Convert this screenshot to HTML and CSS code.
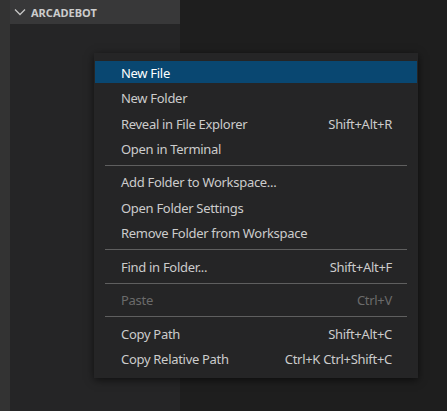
FILE: index.html
```html
<!DOCTYPE html>
<html>
<head>
<meta charset="utf-8">
<link rel="stylesheet" href="styles.css">
</head>
<body>
<div class="workbench">
  <div class="activitybar"></div>
  <div class="sidebar">
    <div class="section-header">
      <svg class="chevron" width="12" height="8" viewBox="0 0 12 8"><polyline points="1,1.5 6,6.5 11,1.5" fill="none" stroke="#c5c5c5" stroke-width="1.3"/></svg>
      <span class="title">ARCADEBOT</span>
    </div>
  </div>
  <div class="editor"></div>
</div>
<div class="menu">
  <div class="item active"><span class="label">New File</span><span class="key"></span></div>
  <div class="item"><span class="label">New Folder</span><span class="key"></span></div>
  <div class="item"><span class="label">Reveal in File Explorer</span><span class="key">Shift+Alt+R</span></div>
  <div class="item"><span class="label">Open in Terminal</span><span class="key"></span></div>
  <div class="sep"></div>
  <div class="item"><span class="label">Add Folder to Workspace...</span><span class="key"></span></div>
  <div class="item"><span class="label">Open Folder Settings</span><span class="key"></span></div>
  <div class="item"><span class="label">Remove Folder from Workspace</span><span class="key"></span></div>
  <div class="sep"></div>
  <div class="item"><span class="label">Find in Folder...</span><span class="key">Shift+Alt+F</span></div>
  <div class="sep"></div>
  <div class="item disabled"><span class="label">Paste</span><span class="key">Ctrl+V</span></div>
  <div class="sep"></div>
  <div class="item"><span class="label">Copy Path</span><span class="key">Shift+Alt+C</span></div>
  <div class="item"><span class="label">Copy Relative Path</span><span class="key">Ctrl+K Ctrl+Shift+C</span></div>
</div>
</body>
</html>
```
FILE: styles.css
```css
html, body {
  margin: 0;
  padding: 0;
  width: 447px;
  height: 411px;
  overflow: hidden;
  background: #1e1e1e;
  font-family: "Noto Sans", "Open Sans", sans-serif;
}
.workbench {
  display: flex;
  height: 411px;
}
.activitybar {
  width: 10px;
  background: #333333;
}
.sidebar {
  width: 170px;
  background: #252526;
  display: flex;
  flex-direction: column;
}
.section-header {
  height: 24px;
  background: #383839;
  display: flex;
  align-items: center;
  padding-left: 4px;
  gap: 5px;
}
.chevron {
  display: block;
}
.title {
  color: #cccccc;
  font-size: 11px;
  font-weight: 700;
  padding-top: 1px;
}
.editor {
  flex: 1;
  background: #1e1e1e;
}
.menu {
  position: absolute;
  left: 94px;
  top: 53px;
  width: 322px;
  padding: 6.33px 1px 7px;
  background: #252526;
  box-shadow: 0 2px 8px rgba(0,0,0,0.6);
  display: flex;
  flex-direction: column;
}
.item {
  height: 22px;
  line-height: 24px;
  margin: 1.67px 0;
  padding: 0 25px 0 26px;
  display: flex;
  justify-content: space-between;
  color: #cccccc;
  font-size: 13px;
  letter-spacing: -0.3px;
  white-space: nowrap;
}
.item.active {
  background: #094771;
  color: #ffffff;
}
.item.disabled {
  color: #6b6b6b;
}
.sep {
  height: 1px;
  background: #5f5f5f;
  margin: 4.4px 10px 2.85px;
}
```
